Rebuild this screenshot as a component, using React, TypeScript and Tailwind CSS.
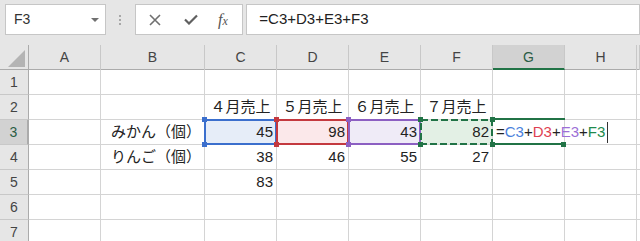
import React from "react";

const colTemplate =
  "grid grid-cols-[29px_72px_104px_72px_72px_72px_72px_72px_72px_1fr]";

const columns = ["A", "B", "C", "D", "E", "F", "G", "H", ""];

type Cell = { text?: string; align?: "left" | "right" | "center"; bg?: string };

const rows: Record<number, Record<string, Cell>> = {
  2: {
    C: { text: "４月売上", align: "center" },
    D: { text: "５月売上", align: "center" },
    E: { text: "６月売上", align: "center" },
    F: { text: "７月売上", align: "center" },
  },
  3: {
    B: { text: "みかん（個）", align: "right" },
    C: { text: "45", align: "right", bg: "bg-[#e6edf8]" },
    D: { text: "98", align: "right", bg: "bg-[#fbe8ea]" },
    E: { text: "43", align: "right", bg: "bg-[#efebf7]" },
    F: { text: "82", align: "right", bg: "bg-[#e3f0e5]" },
  },
  4: {
    B: { text: "りんご（個）", align: "right" },
    C: { text: "38", align: "right" },
    D: { text: "46", align: "right" },
    E: { text: "55", align: "right" },
    F: { text: "27", align: "right" },
  },
  5: {
    C: { text: "83", align: "right" },
  },
};

function Handles({ color }: { color: string }) {
  return (
    <>
      <span className={`absolute -left-[4px] -top-[4px] h-[5px] w-[5px] ${color}`} />
      <span className={`absolute -right-[4px] -top-[4px] h-[5px] w-[5px] ${color}`} />
      <span className={`absolute -left-[4px] -bottom-[4px] h-[5px] w-[5px] ${color}`} />
      <span className={`absolute -right-[4px] -bottom-[4px] h-[5px] w-[5px] ${color}`} />
    </>
  );
}

function Formula() {
  return (
    <>
      <span className="text-[#222]">=</span>
      <span className="text-[#4a7fdc]">C3</span>
      <span className="text-[#222]">+</span>
      <span className="text-[#de3f52]">D3</span>
      <span className="text-[#222]">+</span>
      <span className="text-[#9c6fd6]">E3</span>
      <span className="text-[#222]">+</span>
      <span className="text-[#218a4c]">F3</span>
    </>
  );
}

export default function App() {
  return (
    <div
      className="relative h-[241px] w-[640px] overflow-hidden bg-[#e6e6e6] text-[#222]"
      style={{ fontFamily: '"Liberation Sans", "Noto Sans CJK JP", sans-serif' }}
    >
      {/* formula bar */}
      <div className="flex h-[45px] items-start pt-[4px]">
        <div className="ml-[5px] flex h-[31px] w-[102px] items-center justify-between border border-[#c6c6c6] bg-white pl-[8px] pr-[6px] text-[14px] text-[#333]">
          <span>F3</span>
          <span className="h-0 w-0 border-x-[4px] border-t-[4px] border-x-transparent border-t-[#707070]" />
        </div>
        <div className="flex h-[31px] w-[30px] flex-col items-center justify-center gap-[2px]">
          <span className="h-[2px] w-[2px] bg-[#a8a8a8]" />
          <span className="h-[2px] w-[2px] bg-[#a8a8a8]" />
          <span className="h-[2px] w-[2px] bg-[#a8a8a8]" />
        </div>
        <div className="flex h-[31px] w-[110px] items-center border border-[#c6c6c6] bg-white">
          <svg className="ml-[13px]" width="12" height="12" viewBox="0 0 12 12">
            <path d="M1 1 L11 11 M11 1 L1 11" stroke="#707070" strokeWidth="1.6" fill="none" />
          </svg>
          <svg className="ml-[23px]" width="14" height="11" viewBox="0 0 14 11">
            <path d="M1 5.5 L5 9.5 L13 1.5" stroke="#606060" strokeWidth="2.2" fill="none" />
          </svg>
          <span
            className="ml-[20px] text-[16px] italic text-[#555]"
            style={{ fontFamily: '"Liberation Serif", serif' }}
          >
            f<span className="text-[12px]">x</span>
          </span>
        </div>
        <div className="ml-[3px] flex h-[31px] w-[400px] items-center border border-[#c6c6c6] bg-white pl-[12px] text-[15px] text-[#222]">
          =C3+D3+E3+F3
        </div>
      </div>

      {/* column headers */}
      <div className={`${colTemplate} h-[25px] border-b border-[#ababab] text-[14px] text-[#444]`}>
        <div className="relative border-r border-[#ababab]">
          <span className="absolute bottom-[3px] right-[3px] h-0 w-0 border-b-[17px] border-l-[17px] border-b-[#b4b4b4] border-l-transparent" />
        </div>
        {columns.map((c) => (
          <div
            key={c || "I"}
            className={`flex items-center justify-center border-r border-[#c8c8c8] ${
              c === "G" ? "border-b-2 border-b-[#217346] bg-[#d2d2d2] pt-[2px] text-[#2b5d45]" : ""
            }`}
          >
            {c}
          </div>
        ))}
      </div>

      {/* rows */}
      <div className="bg-white">
        {[1, 2, 3, 4, 5, 6, 7].map((r) => (
          <div key={r} className={`${colTemplate} h-[25px]`}>
            <div
              className={`flex items-center justify-center border-b border-r border-[#c8c8c8] border-r-[#ababab] text-[14px] ${
                r === 3
                  ? "border-r-2 border-r-[#217346] bg-[#d2d2d2] text-[#2b5d45]"
                  : "bg-[#e6e6e6] text-[#444]"
              }`}
            >
              {r}
            </div>
            {columns.map((c) => {
              const cell = rows[r]?.[c];
              const align =
                cell?.align === "right"
                  ? "justify-end pr-[3px]"
                  : cell?.align === "center"
                    ? "justify-center"
                    : "justify-start pl-[3px]";
              return (
                <div
                  key={c || "I"}
                  className={`flex items-center whitespace-nowrap border-b border-r border-[#d4d4d4] text-[15px] ${align} ${cell?.bg ?? ""}`}
                >
                  {cell?.text}
                  {r === 3 && c === "G" ? (
                    <span className="relative z-10 flex items-center">
                      <Formula />
                      <span className="ml-[2px] h-[21px] w-px bg-[#333]" />
                    </span>
                  ) : null}
                </div>
              );
            })}
          </div>
        ))}
      </div>

      {/* reference highlight boxes */}
      <div className="absolute left-[204px] top-[119px] h-[26px] w-[73px] border-2 border-[#3b6fcd]">
        <Handles color="bg-[#3b6fcd]" />
      </div>
      <div className="absolute left-[276px] top-[119px] h-[26px] w-[73px] border-2 border-[#c4393f]">
        <Handles color="bg-[#c4393f]" />
      </div>
      <div className="absolute left-[348px] top-[119px] h-[26px] w-[73px] border-2 border-[#8c5fc2]">
        <Handles color="bg-[#8c5fc2]" />
      </div>
      <div className="absolute left-[420px] top-[119px] h-[26px] w-[73px]">
        <svg className="absolute inset-0" width="73" height="26" viewBox="0 0 73 26">
          <rect x="1" y="1" width="71" height="24" fill="none" stroke="#217346" strokeWidth="2" strokeDasharray="7 3" />
        </svg>
        <span className="absolute -left-[2px] -top-[2px] h-[5px] w-[5px] bg-[#217346]" />
        <span className="absolute -right-[2px] -top-[2px] h-[5px] w-[5px] bg-[#217346]" />
        <span className="absolute -left-[2px] -bottom-[2px] h-[5px] w-[5px] bg-[#217346]" />
        <span className="absolute -right-[2px] -bottom-[2px] h-[5px] w-[5px] bg-[#217346]" />
      </div>

      {/* active cell G3 */}
      <div className="absolute left-[492px] top-[118px] h-[2px] w-[73px] bg-[#217346]" />
      <div className="absolute left-[492px] top-[143px] h-[2px] w-[69px] bg-[#217346]" />
      <div className="absolute left-[561px] top-[142px] h-[5px] w-[5px] bg-[#217346]" />
    </div>
  );
}
